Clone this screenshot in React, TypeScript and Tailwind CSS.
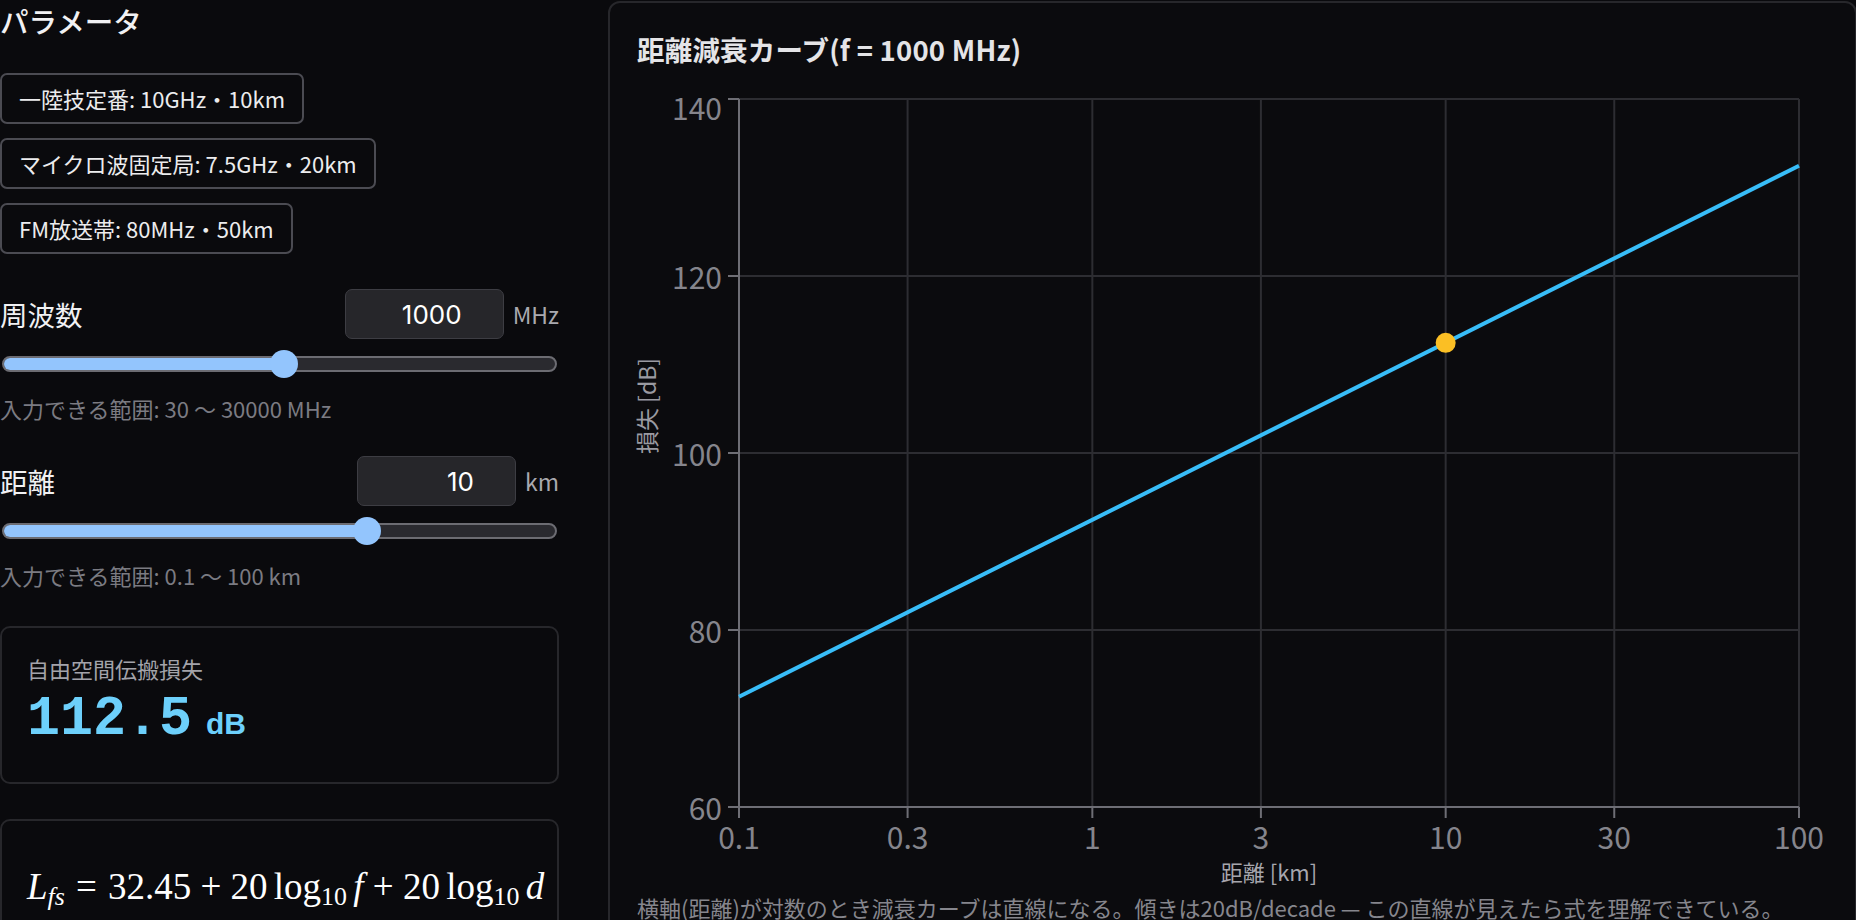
import React from "react";

const presets = [
  "一陸技定番: 10GHz・10km",
  "マイクロ波固定局: 7.5GHz・20km",
  "FM放送帯: 80MHz・50km",
];

// log-scale helpers
const logPos = (v: number, min: number, max: number) =>
  Math.log10(v / min) / Math.log10(max / min);

const freq = 1000;
const dist = 10;
const fspl = (d: number) => 32.45 + 20 * Math.log10(freq) + 20 * Math.log10(d);

function Slider({ p }: { p: number }) {
  const x = 14 + p * 527;
  return (
    <div className="relative ml-[2px] mt-[11px] h-[28px] w-[555px]">
      <div className="absolute left-0 right-0 top-[6px] h-[16px] overflow-hidden rounded-full border-2 border-[#6c6c72] bg-[#2a2a2f]">
        <div className="h-full bg-[#93c5fd]" style={{ width: x }} />
      </div>
      <div
        className="absolute top-0 h-[28px] w-[28px] -translate-x-1/2 rounded-full bg-[#93c5fd]"
        style={{ left: x }}
      />
    </div>
  );
}

function Field({
  label,
  value,
  unit,
}: {
  label: string;
  value: string;
  unit: string;
}) {
  return (
    <div className="flex w-[559px] items-center justify-between">
      <span className="text-[27.5px] leading-[41px] text-[#f1f1f3]">{label}</span>
      <div className="flex items-center gap-[9px]">
        <input
          type="text"
          readOnly
          value={value}
          className="h-[50px] w-[159px] rounded-[7px] border border-[#3d3d43] bg-[#26262a] pr-[41px] text-right font-['Inter',sans-serif] text-[26px] text-white outline-none"
        />
        <span className="text-[23px] text-[#a9a9af]">{unit}</span>
      </div>
    </div>
  );
}

function Chart() {
  const x0 = 129;
  const x1 = 1189;
  const y0 = 18;
  const y1 = 726;
  const xs = (d: number) => x0 + ((Math.log10(d) + 1) / 3) * (x1 - x0);
  const ys = (v: number) => y0 + ((140 - v) / 80) * (y1 - y0);
  const xTicks = [0.1, 0.3, 1, 3, 10, 30, 100];
  const yTicks = [140, 120, 100, 80, 60];

  return (
    <svg width="1245" height="810" className="block">
      {yTicks.slice(0, 4).map((v) => (
        <line key={v} x1={x0} x2={x1} y1={ys(v)} y2={ys(v)} stroke="#2d2d32" strokeWidth="2" />
      ))}
      {xTicks.slice(1).map((d) => (
        <line key={d} x1={xs(d)} x2={xs(d)} y1={y0} y2={y1} stroke="#2d2d32" strokeWidth="2" />
      ))}
      <line x1={x0} x2={x0} y1={y0} y2={y1} stroke="#6e6e75" strokeWidth="2" />
      <line x1={x0} x2={x1} y1={y1} y2={y1} stroke="#6e6e75" strokeWidth="2" />
      {yTicks.map((v) => (
        <g key={v}>
          <line x1={x0 - 11} x2={x0} y1={ys(v)} y2={ys(v)} stroke="#6e6e75" strokeWidth="2" />
          <text
            x={x0 - 17}
            y={ys(v) + (v === 140 ? 8 : 0)}
            textAnchor="end"
            dominantBaseline="central"
            fontSize="30"
            fill="#85858c"
          >
            {v}
          </text>
        </g>
      ))}
      {xTicks.map((d) => (
        <g key={d}>
          <line x1={xs(d)} x2={xs(d)} y1={y1} y2={y1 + 11} stroke="#6e6e75" strokeWidth="2" />
          <text x={xs(d)} y={755} textAnchor="middle" dominantBaseline="central" fontSize="30" fill="#85858c">
            {d}
          </text>
        </g>
      ))}
      <text x={(x0 + x1) / 2} y={790} textAnchor="middle" dominantBaseline="central" fontSize="22" fill="#a6a6ad">
        距離 [km]
      </text>
      <text
        x={36}
        y={325}
        textAnchor="middle"
        dominantBaseline="central"
        fontSize="23"
        fill="#9a9aa1"
        transform="rotate(-90 36 325)"
      >
        損失 [dB]
      </text>
      <line
        x1={x0}
        y1={ys(fspl(0.1))}
        x2={x1}
        y2={ys(fspl(100))}
        stroke="#38bdf8"
        strokeWidth="4"
      />
      <circle cx={xs(dist)} cy={ys(fspl(dist))} r="10" fill="#fbbf24" />
    </svg>
  );
}

export default function App() {
  const loss = fspl(dist).toFixed(1);

  return (
    <div className="grid h-screen grid-cols-[559px_1fr] gap-[49px] overflow-hidden bg-[#0a0a0d] font-['Noto_Sans_CJK_JP',sans-serif] text-[#e8e8ea]">
      {/* パラメータ */}
      <div className="flex flex-col">
        <h2 className="text-[28.5px] font-medium leading-[41px] text-[#f1f1f3]">パラメータ</h2>

        <div className="mt-[32px] flex flex-col items-start gap-[14px]">
          {presets.map((p) => (
            <button
              key={p}
              className="rounded-[7px] border-2 border-[#4b4b52] bg-transparent px-[17px] py-[7px] text-[22px] leading-[33px] text-[#ececee]"
            >
              {p}
            </button>
          ))}
        </div>

        <div className="mt-[35px]">
          <Field label="周波数" value="1000" unit="MHz" />
        </div>
        <Slider p={logPos(freq, 30, 30000)} />
        <p className="mt-[14px] text-[22px] leading-[33px] text-[#7b7b82]">入力できる範囲: 30 〜 30000 MHz</p>

        <div className="mt-[31px]">
          <Field label="距離" value="10" unit="km" />
        </div>
        <Slider p={logPos(dist, 0.1, 100)} />
        <p className="mt-[14px] text-[22px] leading-[33px] text-[#7b7b82]">入力できる範囲: 0.1 〜 100 km</p>

        <div className="mt-[34px] rounded-[10px] border-2 border-[#27272b] px-[25px] py-[24px]">
          <div className="text-[22px] leading-[33px] text-[#a3a3aa]">自由空間伝搬損失</div>
          <div className="flex items-baseline gap-[14px] leading-[69px] text-[#6dd0fb]">
            <span className="font-mono text-[55px] font-bold">{loss}</span>
            <span className="font-['Liberation_Sans',sans-serif] text-[30px] font-bold">dB</span>
          </div>
        </div>

        <div className="mt-[35px] h-[200px] rounded-[10px] border-2 border-[#27272b] px-[25px] pt-[40px]">
          <div className="flex items-baseline whitespace-nowrap font-['Liberation_Serif',serif] text-[37px] leading-[52px] text-white">
            <span className="italic">L</span>
            <sub className="text-[0.7em] italic">fs</sub>
            <span className="mx-[0.3em]">=</span>
            <span>32.45</span>
            <span className="mx-[0.25em]">+</span>
            <span>20</span>
            <span className="ml-[0.17em]">log</span>
            <sub className="text-[0.7em]">10</sub>
            <span className="ml-[0.17em] italic">f</span>
            <span className="mx-[0.25em]">+</span>
            <span>20</span>
            <span className="ml-[0.17em]">log</span>
            <sub className="text-[0.7em]">10</sub>
            <span className="ml-[0.17em] italic">d</span>
          </div>
        </div>
      </div>

      {/* 距離減衰カーブ */}
      <div className="mt-[1px] h-[940px] rounded-[12px] border-2 border-[#27272b] bg-[#0b0b0e]">
        <h3 className="ml-[27px] mt-[26px] text-[27.5px] font-bold leading-[41px] tracking-[0.2px] text-[#e4e4e7]">
          距離減衰カーブ(f = 1000 MHz)
        </h3>
        <div className="mt-[11px]">
          <Chart />
        </div>
        <p className="ml-[27px] whitespace-nowrap text-[22px] leading-[33px] text-[#86868d]">
          横軸(距離)が対数のとき減衰カーブは直線になる。傾きは20dB/decade — この直線が見えたら式を理解できている。
        </p>
      </div>
    </div>
  );
}
